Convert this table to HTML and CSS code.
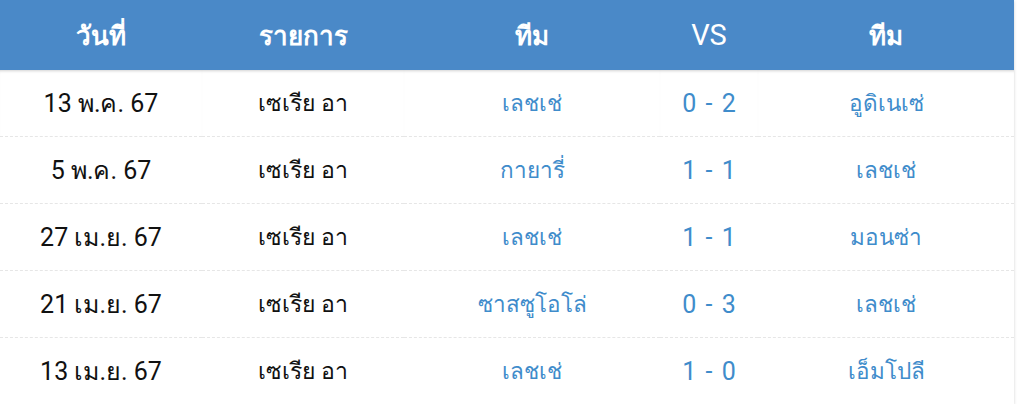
FILE: index.html
```html
<!DOCTYPE html>
<html lang="th">
<head>
<meta charset="utf-8">
<link rel="stylesheet" href="styles.css">
</head>
<body>
<div class="card">
  <table class="tbl">
    <colgroup>
      <col class="c1"><col class="c2"><col class="c3"><col class="c4"><col class="c5">
    </colgroup>
    <thead>
      <tr><th>วันที่</th><th>รายการ</th><th>ทีม</th><th class="latin">VS</th><th>ทีม</th></tr>
    </thead>
    <tbody>
      <tr><td>13 พ.ค. 67</td><td class="comp">เซเรีย อา</td><td class="team">เลชเช่</td><td class="score">0 - 2</td><td class="team">อูดิเนเซ่</td></tr>
      <tr><td>5 พ.ค. 67</td><td class="comp">เซเรีย อา</td><td class="team">กายารี่</td><td class="score">1 - 1</td><td class="team">เลชเช่</td></tr>
      <tr><td>27 เม.ย. 67</td><td class="comp">เซเรีย อา</td><td class="team">เลชเช่</td><td class="score">1 - 1</td><td class="team">มอนซ่า</td></tr>
      <tr><td>21 เม.ย. 67</td><td class="comp">เซเรีย อา</td><td class="team">ซาสซูโอโล่</td><td class="score">0 - 3</td><td class="team">เลชเช่</td></tr>
      <tr><td>13 เม.ย. 67</td><td class="comp">เซเรีย อา</td><td class="team">เลชเช่</td><td class="score">1 - 0</td><td class="team">เอ็มโปลี</td></tr>
    </tbody>
  </table>
</div>
</body>
</html>
```
FILE: styles.css
```css
html, body {
  margin: 0;
  padding: 0;
  background: #ffffff;
}
body {
  font-family: Roboto, "Noto Sans", sans-serif;
}
.card {
  width: 1014px;
  box-shadow: 0 1px 3px rgba(0,0,0,0.18);
}
.tbl {
  width: 100%;
  border-collapse: collapse;
  table-layout: fixed;
}
.c1 { width: 202px; }
.c2 { width: 202px; }
.c3 { width: 256px; }
.c4 { width: 98px; }
.c5 { width: 256px; }
.tbl th {
  background: #4a89c8;
  color: #ffffff;
  font-size: 26px;
  font-weight: 700;
  height: 70px;
  padding: 0;
  text-align: center;
}
.tbl th.latin {
  font-weight: 400;
  font-size: 29px;
}
.tbl td {
  height: 66px;
  padding: 0;
  text-align: center;
  font-size: 25px;
  color: #111111;
  border-bottom: 1px dashed #e6e6e6;
}
.tbl tbody tr:first-child td {
  box-shadow: inset 0 3px 3px -2px rgba(0,0,0,0.18);
}
.tbl tbody tr:last-child td {
  border-bottom: none;
}
.tbl td.comp {
  font-size: 23px;
}
.tbl td.team {
  font-size: 22.5px;
  color: #3f8ccb;
}
.tbl td.score {
  color: #3f8ccb;
  word-spacing: 3px;
}
```
